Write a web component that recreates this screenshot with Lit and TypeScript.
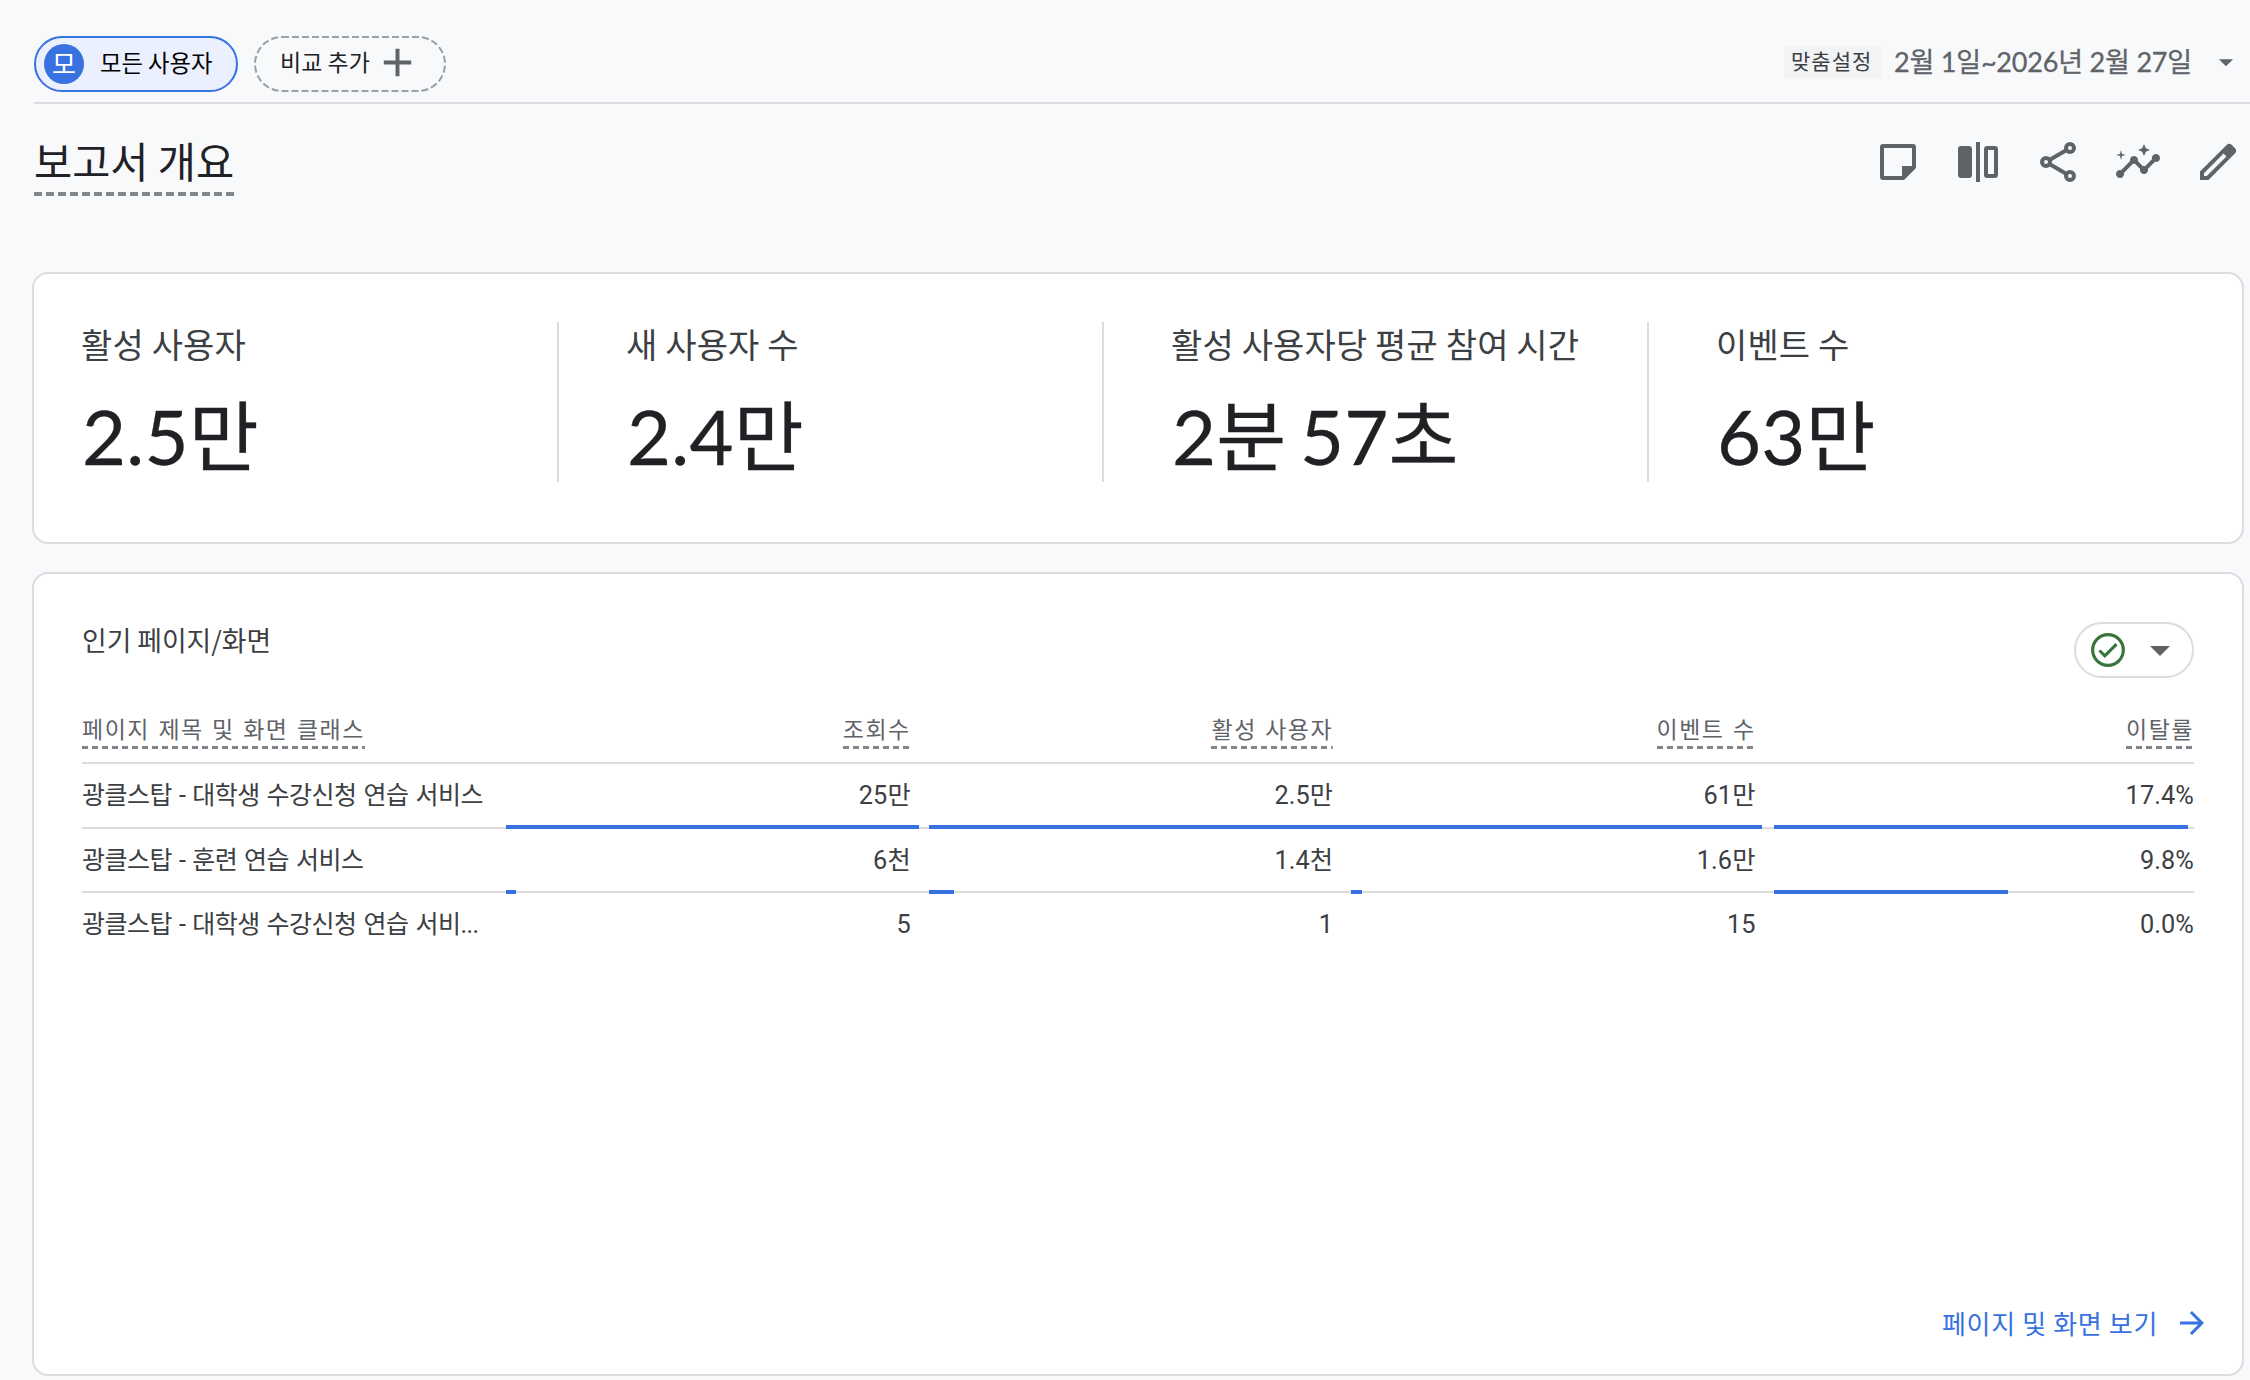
import { LitElement, css, html, svg } from 'lit';
import { customElement, property } from 'lit/decorators.js';

const ICONS = {
  note: svg`<path fill-rule="evenodd" d="M4.500 3h15A1.500 1.500 0 0 1 21 4.500V15l-6 6H4.500A1.500 1.500 0 0 1 3 19.500v-15A1.500 1.500 0 0 1 4.500 3zM5 5v14h9v-5h5V5z"/>`,
  compare: svg`<path fill-rule="evenodd" d="M3.600 4h3.800A1.600 1.600 0 0 1 9 5.600v12.800A1.600 1.600 0 0 1 7.400 20H3.600A1.600 1.600 0 0 1 2 18.400V5.600A1.600 1.600 0 0 1 3.600 4zM11 2h2v20h-2zM16.600 4h3.800A1.600 1.600 0 0 1 22 5.600v12.800a1.600 1.600 0 0 1-1.600 1.600h-3.800a1.600 1.600 0 0 1-1.600-1.600V5.600A1.600 1.600 0 0 1 16.600 4zM17 6v12h3V6z"/>`,
  share: svg`<g fill="none" stroke="currentColor" stroke-width="2"><circle cx="18" cy="5" r="2"/><circle cx="6" cy="12" r="2"/><circle cx="18" cy="19" r="2"/><path d="M7.700 11l8.600-5M7.700 13l8.600 5"/></g>`,
  insights: svg`<path d="M21 8c-1.450 0-2.260 1.440-1.930 2.510l-3.550 3.560c-.3-.09-.74-.09-1.040 0l-2.550-2.550C12.270 10.450 11.460 9 10 9c-1.450 0-2.270 1.440-1.930 2.520l-4.560 4.550C2.440 15.740 1 16.550 1 18c0 1.100.9 2 2 2 1.450 0 2.260-1.440 1.930-2.510l4.550-4.560c.3.09.74.09 1.040 0l2.550 2.550C12.730 16.550 13.540 18 15 18c1.450 0 2.270-1.440 1.930-2.520l3.560-3.550C21.560 12.260 23 11.450 23 10c0-1.100-.9-2-2-2z"/><path d="M15 9l.94-2.070L18 6l-2.060-.93L15 3l-.92 2.070L12 6l2.080.93zM3.500 11L4 9l2-.5L4 8l-.5-2L3 8l-2 .5L3 9z"/>`,
  edit: svg`<path fill-rule="evenodd" d="M3 21v-4.250L16.200 3.580a2 2 0 0 1 2.830 0l1.400 1.420a2 2 0 0 1 0 2.800L7.250 21zM5 19h1.400l9.800-9.780-1.400-1.420L5 17.600z"/>`,
  add: svg`<path d="M5 11h6V5h2v6h6v2h-6v6h-2v-6H5z"/>`,
  dropDown: svg`<path d="M7 10l5 5 5-5z"/>`,
  check: svg`<circle cx="12" cy="12" r="9.200" fill="none" stroke="currentColor" stroke-width="1.900"/><path d="M6.900 12.300l3.200 3.200 7-7" fill="none" stroke="currentColor" stroke-width="1.900"/>`,
  arrow: svg`<path d="M12 4l-1.410 1.410L16.170 11H4v2h12.170l-5.580 5.590L12 20l8-8z"/>`,
};

const METRICS = [
  { label: '활성 사용자', value: '2.5만' },
  { label: '새 사용자 수', value: '2.4만' },
  { label: '활성 사용자당 평균 참여 시간', value: '2분 57초' },
  { label: '이벤트 수', value: '63만' },
];

const COLUMNS = ['페이지 제목 및 화면 클래스', '조회수', '활성 사용자', '이벤트 수', '이탈률'];

// bar is the length of the line under a cell, in pixels
const ROWS = [
  {
    title: '광클스탑 - 대학생 수강신청 연습 서비스',
    cells: [
      { value: '25만', bar: 413 },
      { value: '2.5만', bar: 423 },
      { value: '61만', bar: 411 },
      { value: '17.4%', bar: 414 },
    ],
  },
  {
    title: '광클스탑 - 훈련 연습 서비스',
    cells: [
      { value: '6천', bar: 10 },
      { value: '1.4천', bar: 25 },
      { value: '1.6만', bar: 11 },
      { value: '9.8%', bar: 234 },
    ],
  },
  {
    title: '광클스탑 - 대학생 수강신청 연습 서비...',
    cells: [
      { value: '5', bar: 0 },
      { value: '1', bar: 0 },
      { value: '15', bar: 0 },
      { value: '0.0%', bar: 0 },
    ],
  },
];

@customElement('ga-icon')
export class GaIcon extends LitElement {
  @property() name = 'add';

  static styles = css`
    :host {
      display: block;
      flex: none;
      width: 48px;
      height: 48px;
    }

    svg {
      display: block;
      width: 100%;
      height: 100%;
      fill: currentColor;
    }
  `;

  render() {
    return html`<svg viewBox="0 0 24 24">${ICONS[this.name]}</svg>`;
  }
}

@customElement('dashed-label')
export class DashedLabel extends LitElement {
  static styles = css`
    :host {
      display: inline-flex;
      flex-direction: column;
      gap: var(--line-gap, 2px);
    }

    .line {
      display: block;
      width: 0;
      min-width: 100%;
      height: var(--line-height, 3px);
      color: #80868b;
    }

    line {
      stroke: currentColor;
      stroke-width: 8;
      stroke-dasharray: var(--line-dash, 6 4);
    }
  `;

  render() {
    return html`
      <slot></slot>
      <svg class="line"><line x1="0" y1="0" x2="100%" y2="0"></line></svg>
    `;
  }
}

@customElement('metric-card')
export class MetricCard extends LitElement {
  static styles = css`
    :host {
      display: grid;
      grid-template-columns: repeat(4, 545px);
      box-sizing: border-box;
      height: 272px;
      padding: 48px 0 0 48px;
      overflow: hidden;
      background: #fff;
      border: 2px solid #dadce0;
      border-radius: 16px;
    }

    .metric {
      display: flex;
      flex-direction: column;
      width: 475px;
      height: 160px;
      border-right: 2px solid #dadce0;
    }

    .metric:last-child {
      border-right: 0;
    }

    .metric__label {
      height: 43px;
      line-height: 43px;
      margin-left: -1px;
      color: #3c4043;
      font-size: 34px;
      letter-spacing: 0.150px;
      white-space: nowrap;
    }

    .metric__value {
      line-height: 110px;
      margin-top: 16px;
      color: #202124;
      font-family: Lato, 'Noto Sans CJK KR', sans-serif;
      font-size: 76px;
      letter-spacing: 0.200px;
      word-spacing: -6px;
      white-space: nowrap;
      -webkit-text-stroke: 0.300px;
    }
  `;

  render() {
    return METRICS.map(
      (metric) => html`
        <div class="metric">
          <div class="metric__label">${metric.label}</div>
          <div class="metric__value">${metric.value}</div>
        </div>
      `
    );
  }
}

@customElement('pages-card')
export class PagesCard extends LitElement {
  static styles = css`
    :host {
      display: flex;
      flex-direction: column;
      box-sizing: border-box;
      height: 804px;
      padding: 48px;
      background: #fff;
      border: 2px solid #dadce0;
      border-radius: 16px;
      color: #3c4043;
    }

    .head {
      display: flex;
      justify-content: space-between;
      height: 86px;
    }

    .head__title {
      line-height: 36px;
      font-size: 26.800px;
    }

    .status {
      display: flex;
      align-items: center;
      box-sizing: border-box;
      width: 120px;
      height: 56px;
      padding-left: 12px;
      gap: 8px;
      border: 2px solid #dadce0;
      border-radius: 28px;
      color: #5f6368;
    }

    .status__check {
      width: 40px;
      height: 40px;
      color: #37753b;
    }

    .table {
      display: grid;
      grid-template-rows: 56px 65px 64px 64px;
    }

    .row {
      display: grid;
      grid-template-columns: repeat(5, 422.400px);
      box-sizing: border-box;
      border-bottom: 2px solid #dadce0;
    }

    .row:last-child {
      border-bottom: 0;
    }

    .cell {
      position: relative;
      padding-right: 16px;
      text-align: right;
      font-family: Roboto, 'Noto Sans CJK KR', sans-serif;
      font-size: 25.300px;
      line-height: 63px;
      letter-spacing: 0.100px;
      white-space: nowrap;
    }

    .cell:first-child {
      padding-right: 0;
      text-align: left;
      font-size: 25px;
      letter-spacing: -0.500px;
      word-spacing: 1.200px;
    }

    .cell:last-child {
      padding-right: 0;
    }

    .cell_head,
    .cell_head:first-child {
      padding-top: 4px;
      color: #5f6368;
      font-family: 'Noto Sans CJK KR', sans-serif;
      font-size: 23px;
      line-height: 32px;
      letter-spacing: 1.500px;
      word-spacing: 1.750px;
    }

    .bar {
      position: absolute;
      left: 2px;
      bottom: -2px;
      height: 4px;
      background: #3871e0;
    }

    .link {
      display: flex;
      align-items: center;
      align-self: flex-end;
      margin: auto -16px -15px 0;
      gap: 16px;
      color: #3871e0;
      font-size: 26px;
      line-height: 36px;
      letter-spacing: 0.650px;
    }

    .link__text {
      margin-top: -5px;
    }

    .link__arrow {
      width: 36px;
      height: 36px;
      margin-top: -4px;
    }
  `;

  render() {
    return html`
      <div class="head">
        <div class="head__title">인기 페이지/화면</div>
        <div class="status">
          <ga-icon class="status__check" name="check"></ga-icon>
          <ga-icon name="dropDown"></ga-icon>
        </div>
      </div>
      <div class="table">
        <div class="row">
          ${COLUMNS.map(
            (column) => html`
              <div class="cell cell_head"><dashed-label>${column}</dashed-label></div>
            `
          )}
        </div>
        ${ROWS.map(
          (row) => html`
            <div class="row">
              <div class="cell">${row.title}</div>
              ${row.cells.map(
                (cell) => html`
                  <div class="cell">
                    ${cell.value}
                    <div class="bar" style="width: ${cell.bar}px"></div>
                  </div>
                `
              )}
            </div>
          `
        )}
      </div>
      <div class="link">
        <span class="link__text">페이지 및 화면 보기</span>
        <ga-icon class="link__arrow" name="arrow"></ga-icon>
      </div>
    `;
  }
}

@customElement('app-root')
export class AppRoot extends LitElement {
  static styles = css`
    :host {
      display: block;
      box-sizing: border-box;
      width: 2250px;
      height: 1380px;
      overflow: hidden;
      background: #f8f9fb;
      font-family: 'Noto Sans CJK KR', sans-serif;
    }

    .topbar {
      display: flex;
      align-items: flex-start;
      box-sizing: border-box;
      height: 104px;
      margin-left: 34px;
      padding-top: 36px;
      border-bottom: 2px solid #dadce0;
    }

    .chip {
      display: flex;
      align-items: center;
      box-sizing: border-box;
      width: 204px;
      height: 56px;
      padding-left: 8px;
      gap: 16px;
      border: 2px solid #3871e0;
      border-radius: 28px;
      background: #ebf0fe;
      color: #000;
      font-size: 23.300px;
      white-space: nowrap;
    }

    .chip__avatar {
      width: 40px;
      height: 40px;
      border-radius: 50%;
      background: #3871e0;
      color: #fff;
      font-size: 26px;
      line-height: 37px;
      text-align: center;
    }

    .chip__name {
      margin-top: -4px;
    }

    .add {
      display: grid;
      width: 192px;
      height: 56px;
      margin-left: 16px;
      color: #202124;
      font-size: 23px;
      white-space: nowrap;
    }

    .add > * {
      grid-area: 1 / 1;
    }

    .add__outline {
      fill: none;
      stroke: #9aa0a6;
      stroke-width: 2;
      stroke-dasharray: 7 3;
    }

    .add__content {
      display: flex;
      align-items: center;
      height: 52px;
      padding-left: 26px;
      gap: 8px;
    }

    .add__name {
      margin-top: -2px;
    }

    .add__icon {
      width: 47px;
      height: 47px;
      margin-left: -4px;
      color: #5f6368;
    }

    .range {
      display: flex;
      align-items: center;
      height: 52px;
      margin-left: auto;
      color: #5f6368;
    }

    .range__kind {
      box-sizing: border-box;
      width: 98px;
      height: 32px;
      padding-left: 7px;
      background: #f1f3f4;
      color: #3c4043;
      font-size: 21px;
      line-height: 28px;
      letter-spacing: 1px;
    }

    .range__dates {
      width: 300px;
      margin: -3px 0 0 12px;
      font-family: Lato, 'Noto Sans CJK KR', sans-serif;
      font-size: 27px;
      letter-spacing: -0.200px;
      white-space: nowrap;
      -webkit-text-stroke: 0.300px;
    }

    .range__arrow {
      width: 34px;
      height: 34px;
      margin: 0 7px 0 15px;
    }

    .titlebar {
      display: flex;
      justify-content: space-between;
      height: 168px;
      padding: 30px 8px 0 34px;
      box-sizing: border-box;
    }

    .title {
      margin: 0;
      color: #202124;
      font-size: 41.500px;
      font-weight: 400;
      line-height: 52px;
    }

    .title dashed-label {
      --line-gap: 6px;
      --line-height: 4px;
      --line-dash: 8 4;
    }

    .tools {
      display: flex;
      gap: 32px;
      padding-top: 4px;
      color: #5f6368;
    }

    .cards {
      display: flex;
      flex-direction: column;
      gap: 28px;
      padding: 0 6px 0 32px;
    }
  `;

  render() {
    return html`
      <div class="topbar">
        <div class="chip">
          <div class="chip__avatar">모</div>
          <span class="chip__name">모든 사용자</span>
        </div>
        <div class="add">
          <svg width="192" height="56">
            <rect class="add__outline" x="1" y="1" width="190" height="54" rx="27"></rect>
          </svg>
          <div class="add__content">
            <span class="add__name">비교 추가</span>
            <ga-icon class="add__icon" name="add"></ga-icon>
          </div>
        </div>
        <div class="range">
          <div class="range__kind">맞춤설정</div>
          <div class="range__dates">2월 1일~2026년 2월 27일</div>
          <ga-icon class="range__arrow" name="dropDown"></ga-icon>
        </div>
      </div>
      <div class="titlebar">
        <h1 class="title"><dashed-label>보고서 개요</dashed-label></h1>
        <div class="tools">
          ${['note', 'compare', 'share', 'insights', 'edit'].map(
            (name) => html`<ga-icon name=${name}></ga-icon>`
          )}
        </div>
      </div>
      <div class="cards">
        <metric-card></metric-card>
        <pages-card></pages-card>
      </div>
    `;
  }
}
